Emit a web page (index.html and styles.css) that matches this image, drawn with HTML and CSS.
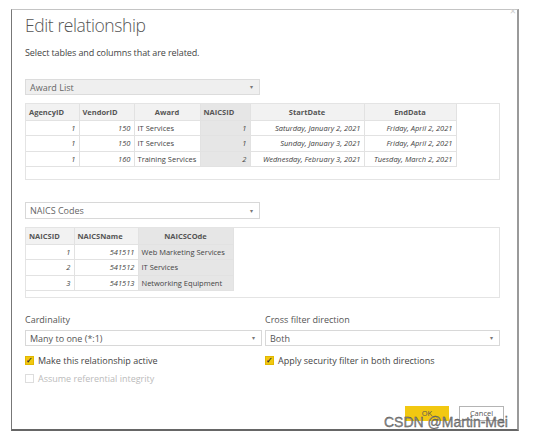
FILE: index.html
```html
<!DOCTYPE html>
<html lang="en">
<head>
    <meta charset="UTF-8">
    <meta name="viewport" content="width=device-width, initial-scale=1.0">
    <title>Edit relationship</title>
    <link rel="stylesheet" href="styles.css">
</head>
<body>
    <div class="dialog">
        <span class="close">&times;</span>
        <h1 class="title">Edit relationship</h1>
        <p class="subtitle">Select tables and columns that are related.</p>

        <!-- first table -->
        <div class="picker picker-grey">
            <span>Award List</span>
            <span class="caret">&#9662;</span>
        </div>
        <div class="table-box box-award">
            <table class="grid">
                <colgroup>
                    <col style="width:53px">
                    <col style="width:55px">
                    <col style="width:66px">
                    <col style="width:50px">
                    <col style="width:114px">
                    <col style="width:92px">
                </colgroup>
                <tr>
                    <th class="left">AgencyID</th>
                    <th class="left">VendorID</th>
                    <th>Award</th>
                    <th class="left picked">NAICSID</th>
                    <th>StartDate</th>
                    <th>EndData</th>
                </tr>
                <tr>
                    <td class="num">1</td>
                    <td class="num">150</td>
                    <td>IT Services</td>
                    <td class="num picked">1</td>
                    <td class="num">Saturday, January 2, 2021</td>
                    <td class="num">Friday, April 2, 2021</td>
                </tr>
                <tr>
                    <td class="num">1</td>
                    <td class="num">150</td>
                    <td>IT Services</td>
                    <td class="num picked">1</td>
                    <td class="num">Sunday, January 3, 2021</td>
                    <td class="num">Friday, April 2, 2021</td>
                </tr>
                <tr>
                    <td class="num">1</td>
                    <td class="num">160</td>
                    <td>Training Services</td>
                    <td class="num picked">2</td>
                    <td class="num">Wednesday, February 3, 2021</td>
                    <td class="num">Tuesday, March 2, 2021</td>
                </tr>
            </table>
        </div>

        <!-- second table -->
        <div class="picker picker-white">
            <span>NAICS Codes</span>
            <span class="caret">&#9662;</span>
        </div>
        <div class="table-box box-naics">
            <table class="grid">
                <colgroup>
                    <col style="width:48px">
                    <col style="width:64px">
                    <col style="width:95px">
                </colgroup>
                <tr>
                    <th class="left">NAICSID</th>
                    <th class="left">NAICSName</th>
                    <th class="picked">NAICSCOde</th>
                </tr>
                <tr>
                    <td class="num">1</td>
                    <td class="num">541511</td>
                    <td class="picked">Web Marketing Services</td>
                </tr>
                <tr>
                    <td class="num">2</td>
                    <td class="num">541512</td>
                    <td class="picked">IT Services</td>
                </tr>
                <tr>
                    <td class="num">3</td>
                    <td class="num">541513</td>
                    <td class="picked">Networking Equipment</td>
                </tr>
            </table>
        </div>

        <!-- options -->
        <div class="options">
            <div class="field">
                <label class="field-label">Cardinality</label>
                <div class="picker picker-white picker-wide">
                    <span>Many to one (*:1)</span>
                    <span class="caret">&#9662;</span>
                </div>
                <div class="check">
                    <span class="box on">&#10003;</span>
                    <span>Make this relationship active</span>
                </div>
                <div class="check check-off">
                    <span class="box"></span>
                    <span>Assume referential integrity</span>
                </div>
            </div>
            <div class="field">
                <label class="field-label">Cross filter direction</label>
                <div class="picker picker-white picker-wide">
                    <span>Both</span>
                    <span class="caret">&#9662;</span>
                </div>
                <div class="check">
                    <span class="box on">&#10003;</span>
                    <span>Apply security filter in both directions</span>
                </div>
            </div>
        </div>

        <div class="button-box">
            <button class="btn btn-ok">OK</button>
            <button class="btn btn-cancel">Cancel</button>
        </div>
    </div>

    <div class="watermark">CSDN @Martin-Mei</div>
</body>
</html>
```

FILE: styles.css
```css
* {
    box-sizing: border-box;
    margin: 0;
    padding: 0;
}

body {
    background: #fff;
    font-family: "Open Sans", "Noto Sans", sans-serif;
    color: #444;
    position: relative;
    width: 534px;
    height: 442px;
    overflow: hidden;
}

.dialog {
    position: relative;
    margin: 9px 0 0 11px;
    width: 508px;
    height: 422px;
    border-top: 1px solid #c4c4c4;
    border-left: 1px solid #777;
    border-right: 2px solid #9a9a9a;
    border-bottom: 2px solid #666;
    padding: 0 17px 0 13px;
}

.close {
    position: absolute;
    top: -5px;
    right: 1px;
    font-size: 11px;
    color: #d0d0d0;
    line-height: 11px;
}

.title {
    font-size: 17.5px;
    font-weight: 300;
    letter-spacing: -0.4px;
    color: #555;
    line-height: 30px;
    height: 30px;
}

.subtitle {
    margin-top: 6px;
    font-size: 9px;
    letter-spacing: -0.1px;
    line-height: 14px;
    height: 14px;
    color: #444;
}

/* dropdowns */
.picker {
    display: flex;
    justify-content: space-between;
    align-items: center;
    width: 235px;
    padding: 0 6px 0 4px;
    font-size: 9px;
    color: #666;
}

.picker-grey {
    margin-top: 19px;
    height: 16px;
    background: #efefef;
    border: 1px solid #dcdcdc;
}

.picker-white {
    margin-top: 22px;
    height: 17px;
    background: #fff;
    border: 1px solid #d8d8d8;
}

.picker-wide {
    width: auto;
    margin-top: 4px;
    height: 16px;
    color: #555;
}

.caret {
    font-size: 6px;
    color: #777;
}

/* tables */
.table-box {
    margin-top: 8px;
    border: 1px solid #e4e4e4;
}

.box-award {
    height: 77px;
}

.box-naics {
    height: 71px;
}

.grid {
    border-collapse: collapse;
    table-layout: fixed;
    font-size: 7.5px;
    color: #444;
}

.grid th,
.grid td {
    border: 1px solid #e2e2e2;
    padding: 0 3px;
    white-space: nowrap;
    overflow: hidden;
}

.grid tr:first-child th {
    border-top: none;
}

.grid th:first-child,
.grid td:first-child {
    border-left: none;
}

.grid th {
    height: 16px;
    background: #f2f2f2;
    font-weight: 700;
    text-align: center;
    color: #555;
}

.grid td {
    height: 15.5px;
    background: #fff;
}

.grid .left {
    text-align: left;
}

.grid .num {
    text-align: right;
    font-style: italic;
}

.grid .picked {
    background: #e6e6e6;
}

/* options */
.options {
    display: grid;
    grid-template-columns: 237px 235px;
    column-gap: 3px;
    margin-top: 16px;
}

.field-label {
    display: block;
    font-size: 9px;
    line-height: 12px;
    color: #555;
}

.check {
    display: flex;
    align-items: center;
    gap: 4px;
    margin-top: 7px;
    height: 14px;
    font-size: 9px;
    color: #444;
}

.check + .check {
    margin-top: 4px;
}

.check-off {
    color: #bbb;
}

.box {
    width: 9px;
    height: 9px;
    border: 1px solid #ddd;
    display: flex;
    align-items: center;
    justify-content: center;
    font-size: 8px;
    line-height: 1;
}

.box.on {
    background: #f2c811;
    border-color: #e2b800;
    color: #333;
    font-weight: 700;
}

.button-box {
    display: flex;
    justify-content: flex-end;
    gap: 10px;
    margin-top: 21px;
    margin-right: -4px;
}

.btn {
    height: 15px;
    font-family: "Open Sans", sans-serif;
    font-size: 7.5px;
    line-height: 13px;
    color: #555;
    border: none;
}

.btn-ok {
    width: 44px;
    background: #f2c811;
}

.btn-cancel {
    width: 45px;
    background: #fff;
    border: 1px solid #b4b4b4;
}

.watermark {
    position: absolute;
    left: 384px;
    top: 415px;
    font-family: "Liberation Sans", Arial, sans-serif;
    font-size: 14px;
    line-height: 15px;
    color: #8c8c8c;
    -webkit-text-stroke: 0.3px #444;
}
```
